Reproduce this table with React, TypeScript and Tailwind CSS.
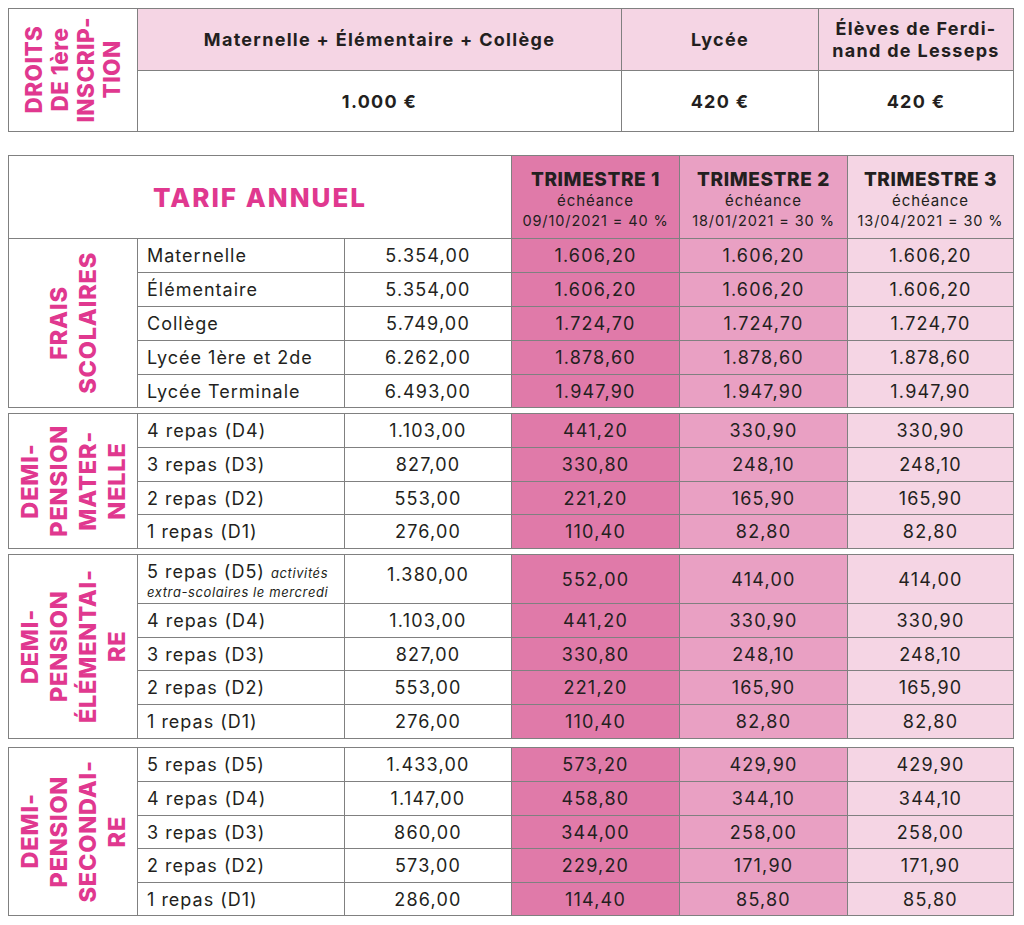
import React from "react";

const B = "border-[#808080]";

type Row = { label: React.ReactNode; annual: string; t: [string, string, string]; tall?: boolean };

const frais: Row[] = [
  { label: "Maternelle", annual: "5.354,00", t: ["1.606,20", "1.606,20", "1.606,20"] },
  { label: "Élémentaire", annual: "5.354,00", t: ["1.606,20", "1.606,20", "1.606,20"] },
  { label: "Collège", annual: "5.749,00", t: ["1.724,70", "1.724,70", "1.724,70"] },
  { label: "Lycée 1ère et 2de", annual: "6.262,00", t: ["1.878,60", "1.878,60", "1.878,60"] },
  { label: "Lycée Terminale", annual: "6.493,00", t: ["1.947,90", "1.947,90", "1.947,90"] },
];

const mat: Row[] = [
  { label: "4 repas (D4)", annual: "1.103,00", t: ["441,20", "330,90", "330,90"] },
  { label: "3 repas (D3)", annual: "827,00", t: ["330,80", "248,10", "248,10"] },
  { label: "2 repas (D2)", annual: "553,00", t: ["221,20", "165,90", "165,90"] },
  { label: "1 repas (D1)", annual: "276,00", t: ["110,40", "82,80", "82,80"] },
];

const elem: Row[] = [
  {
    label: (
      <div className="leading-[18px] pt-[8px]">
        5 repas (D5) <span className="italic text-[13px] tracking-[0.6px]">activités</span>
        <br />
        <span className="italic text-[13px] tracking-[0.6px]">extra-scolaires le mercredi</span>
      </div>
    ),
    annual: "1.380,00",
    t: ["552,00", "414,00", "414,00"],
    tall: true,
  },
  { label: "4 repas (D4)", annual: "1.103,00", t: ["441,20", "330,90", "330,90"] },
  { label: "3 repas (D3)", annual: "827,00", t: ["330,80", "248,10", "248,10"] },
  { label: "2 repas (D2)", annual: "553,00", t: ["221,20", "165,90", "165,90"] },
  { label: "1 repas (D1)", annual: "276,00", t: ["110,40", "82,80", "82,80"] },
];

const sec: Row[] = [
  { label: "5 repas (D5)", annual: "1.433,00", t: ["573,20", "429,90", "429,90"] },
  { label: "4 repas (D4)", annual: "1.147,00", t: ["458,80", "344,10", "344,10"] },
  { label: "3 repas (D3)", annual: "860,00", t: ["344,00", "258,00", "258,00"] },
  { label: "2 repas (D2)", annual: "573,00", t: ["229,20", "171,90", "171,90"] },
  { label: "1 repas (D1)", annual: "286,00", t: ["114,40", "85,80", "85,80"] },
];

const tBg = ["bg-[#e07aa9]", "bg-[#e9a0c3]", "bg-[#f5d5e4]"];

function VLabel({ lines, span }: { lines: string[]; span: string }) {
  return (
    <div className={`${span} border-r border-b ${B} flex items-center justify-center`}>
      <div className="[writing-mode:vertical-rl] rotate-180 text-center text-[#e0388f] font-extrabold text-[23.5px] leading-[29px] tracking-[0.8px]">
        {lines.map((l, i) => (
          <React.Fragment key={i}>
            {i > 0 && <br />}
            {l}
          </React.Fragment>
        ))}
      </div>
    </div>
  );
}

function Rows({ rows }: { rows: Row[] }) {
  return (
    <>
      {rows.map((r, i) => (
        <React.Fragment key={i}>
          <div
            className={`border-r border-b ${B} flex ${r.tall ? "items-start" : "items-center"} pl-[9px] text-[18px] tracking-[1px]`}
          >
            {r.label}
          </div>
          <div
            className={`border-r border-b ${B} flex justify-center ${r.tall ? "items-start pt-[6px]" : "items-center"} text-[18px] tracking-[1.2px]`}
          >
            {r.annual}
          </div>
          {r.t.map((v, j) => (
            <div
              key={j}
              className={`${tBg[j]} border-r border-b ${B} flex items-center justify-center text-[18px] tracking-[1.2px]`}
            >
              {v}
            </div>
          ))}
        </React.Fragment>
      ))}
    </>
  );
}

const cols = "grid-cols-[129px_207px_167px_168px_168px_166px]";
const topHead = `bg-[#f5d5e4] border-r border-b ${B} flex items-center justify-center text-center font-bold text-[18px] tracking-[1.3px]`;
const topVal = `border-r border-b ${B} flex items-center justify-center font-bold text-[18px] tracking-[1.3px]`;

export default function App() {
  return (
    <div className="[font-family:Inter,sans-serif] text-[#231f20] bg-white w-[1024px] h-[925px] pt-[8px] pl-[8px]">
      {/* Top table */}
      <div className={`w-[1006px] border-t border-l ${B} grid grid-cols-[129px_484px_197px_195px] grid-rows-[62px_61px]`}>
        <div className={`row-span-2 border-r border-b ${B} flex items-center justify-center`}>
          <div className="[writing-mode:vertical-rl] rotate-180 text-center text-[#e0388f] font-extrabold text-[22.5px] leading-[26px] tracking-[0.5px]">
            DROITS
            <br />
            DE 1ère
            <br />
            INSCRIP-
            <br />
            TION
          </div>
        </div>
        <div className={topHead}>Maternelle + Élémentaire + Collège</div>
        <div className={topHead}>Lycée</div>
        <div className={`${topHead} leading-[22px]`}>
          Élèves de Ferdi-
          <br />
          nand de Lesseps
        </div>
        <div className={topVal}>1.000 €</div>
        <div className={topVal}>420 €</div>
        <div className={topVal}>420 €</div>
      </div>

      <div className="flex flex-col mt-[23px] w-[1006px]">
        {/* Block 1: header + frais scolaires */}
        <div className={`border-t border-l ${B} grid ${cols} grid-rows-[83px_34px_34px_34px_34px_33px]`}>
          <div className={`col-span-3 border-r border-b ${B} flex items-center justify-center text-[#e0388f] font-extrabold text-[26px] tracking-[2px]`}>
            TARIF ANNUEL
          </div>
          {[
            ["TRIMESTRE 1", "09/10/2021 = 40 %"],
            ["TRIMESTRE 2", "18/01/2021 = 30 %"],
            ["TRIMESTRE 3", "13/04/2021 = 30 %"],
          ].map(([t, d], j) => (
            <div
              key={j}
              className={`${tBg[j]} border-r border-b ${B} flex flex-col items-center justify-center pt-[4px]`}
            >
              <div className="font-extrabold text-[19px] leading-[22px] tracking-[0.6px]">{t}</div>
              <div className="text-[15px] leading-[20px] tracking-[0.9px]">échéance</div>
              <div className="text-[14.5px] leading-[19px] tracking-[0.9px]">{d}</div>
            </div>
          ))}
          <VLabel lines={["FRAIS", "SCOLAIRES"]} span="row-span-5" />
          <Rows rows={frais} />
        </div>

        {/* Block 2 */}
        <div className={`mt-[5px] border-t border-l ${B} grid ${cols} grid-rows-[34px_34px_33px_34px]`}>
          <VLabel lines={["DEMI-", "PENSION", "MATER-", "NELLE"]} span="row-span-4" />
          <Rows rows={mat} />
        </div>

        {/* Block 3 */}
        <div className={`mt-[5px] border-t border-l ${B} grid ${cols} grid-rows-[49px_34px_33px_34px_34px]`}>
          <VLabel lines={["DEMI-", "PENSION", "ÉLÉMENTAI-", "RE"]} span="row-span-5" />
          <Rows rows={elem} />
        </div>

        {/* Block 4 */}
        <div className={`mt-[8px] border-t border-l ${B} grid ${cols} grid-rows-[34px_34px_33px_34px_33px]`}>
          <VLabel lines={["DEMI-", "PENSION", "SECONDAI-", "RE"]} span="row-span-5" />
          <Rows rows={sec} />
        </div>
      </div>
    </div>
  );
}
